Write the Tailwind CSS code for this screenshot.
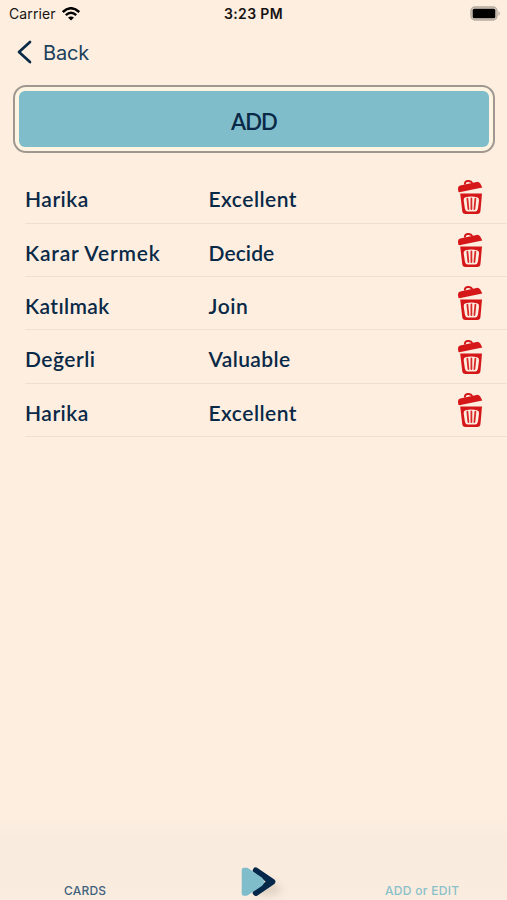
<!DOCTYPE html>
<html lang="tr">
<head>
<meta charset="utf-8">
<title>Cards</title>
<script src="https://cdn.jsdelivr.net/npm/@tailwindcss/browser@4"></script>
</head>
<body class="bg-[#fdeee0]">
<svg class="hidden">
  <symbol id="trash" viewBox="0 0 26 36">
    <path d="M8 5.500C6.800 1.800 13.500 .500 15.200 4" fill="none" stroke="#d51719" stroke-width="2"/>
    <path d="M1 10.500Q.800 7.200 3.200 6.500L19.500 2.900Q22 2.600 23.400 4.700L25.300 8.400L2.400 13.300Q1.200 13.300 1 10.500Z" fill="#d51719"/>
    <path d="M3.200 14.500H25L23.500 31.700Q23.200 35 20.200 35H8.500Q5.500 35 5.200 31.700Z" fill="#d51719"/>
    <path d="M8.500 18.200Q14.300 17 20 18.200Q22.300 18.800 22 21.400L21 29.500Q20.600 32.200 18.100 32.400H10.700Q8.200 32.200 7.900 29.500L6.700 21.400Q6.400 18.800 8.500 18.200Z" fill="#fdeee0"/>
    <path d="M10.400 19.600L11.400 30M14.400 19.400V30M18.400 19.600L17.400 30" stroke="#d9282a" stroke-width="1.800" stroke-linecap="round"/>
  </symbol>
</svg>
<main class="flex h-[900px] w-[507px] flex-col overflow-hidden font-['Lato','Noto_Sans',sans-serif] text-[#092947]">
  <header class="grid h-[27px] grid-cols-3 items-center pr-[6px] pl-[9px] font-['Inter',sans-serif] text-[#171412]">
    <div class="flex items-center gap-[6px]">
      <span class="text-[14px] tracking-[0.1px]">Carrier</span>
      <svg class="h-[14px] w-[18px]" viewBox="0 0 18 14" fill="none" stroke="#000" stroke-width="2.500"><path d="M.8 5Q9-2.500 17.200 5M3.800 8.100Q9 3.500 14.200 8.100"/><path d="M9 13.500L6 10.600Q9 8.300 12 10.600Z" fill="#000" stroke="none"/></svg>
    </div>
    <span class="pr-[3px] text-center text-[14px] font-semibold tracking-[0.35px]">3:23 PM</span>
    <svg class="h-[15px] w-[31px] justify-self-end" viewBox="0 0 31 15"><rect x="1" y="1" width="26" height="13" rx="4" fill="#dccfc3" stroke="#b5aaa0" stroke-width="1.400"/><rect x="2.700" y="2.700" width="22.600" height="9.600" rx="1.500" fill="#000"/><path d="M28.500 5Q31 7.500 28.500 10Z" fill="#aaa097"/></svg>
  </header>
  <nav class="flex h-[58px] items-start pt-[13px] pl-[17px]">
    <svg class="h-6 w-[15px]" viewBox="0 0 15 24" fill="none" stroke="#092947" stroke-width="2.700" stroke-linecap="round" stroke-linejoin="round"><path d="M13 2L2 12L13 22"/></svg>
    <span class="ml-[11px] font-['Inter',sans-serif] text-[20px] leading-[26px] tracking-[-0.2px] text-[#203f5c]">Back</span>
  </nav>
  <div class="mr-[12px] ml-[13px] h-[68px] rounded-[13px] border-2 border-[#a09890] bg-[#fff4e2] p-[4px]">
    <button class="flex h-full w-full items-center justify-center rounded-[6px] bg-[#80bdcb] pt-[5px] text-[22px] font-semibold tracking-[-0.9px]">ADD</button>
  </div>
  <ul class="mt-[17.500px] ml-[25px] text-[21px] font-semibold">
    <li class="flex h-[53.300px] items-center border-b border-[#eedfd2]"><span class="w-[183.500px] pt-[5px] tracking-[0.5px]">Harika</span><span class="grow pt-[5px] tracking-[0.5px]">Excellent</span><svg class="mr-[24px] h-9 w-[26px]"><use href="#trash"/></svg></li>
    <li class="flex h-[53.300px] items-center border-b border-[#eedfd2]"><span class="w-[183.500px] pt-[5px] tracking-[0.8px]">Karar Vermek</span><span class="grow pt-[5px] tracking-[0.1px]">Decide</span><svg class="mr-[24px] h-9 w-[26px]"><use href="#trash"/></svg></li>
    <li class="flex h-[53.300px] items-center border-b border-[#eedfd2]"><span class="w-[183.500px] pt-[5px] tracking-[0.4px]">Katılmak</span><span class="grow pt-[5px] tracking-[0.6px]">Join</span><svg class="mr-[24px] h-9 w-[26px]"><use href="#trash"/></svg></li>
    <li class="flex h-[53.300px] items-center border-b border-[#eedfd2]"><span class="w-[183.500px] pt-[5px] tracking-[0.5px]">Değerli</span><span class="grow pt-[5px] tracking-[0.4px]">Valuable</span><svg class="mr-[24px] h-9 w-[26px]"><use href="#trash"/></svg></li>
    <li class="flex h-[53.300px] items-center border-b border-[#eedfd2]"><span class="w-[183.500px] pt-[5px] tracking-[0.5px]">Harika</span><span class="grow pt-[5px] tracking-[0.5px]">Excellent</span><svg class="mr-[24px] h-9 w-[26px]"><use href="#trash"/></svg></li>
  </ul>
  <footer class="mt-auto flex h-[84px] items-end bg-linear-to-b from-[#fdeee0] via-[#f8eadd] via-35% to-[#faede0] pl-[64px] font-['Inter',sans-serif] text-[12px] font-medium">
    <span class="w-[176px] leading-[18px] tracking-[0.2px] text-[#41617d]">CARDS</span>
    <svg class="mb-[2px] h-[34px] w-[145px] overflow-visible" viewBox="0 0 145 34"><ellipse cx="27" cy="25" rx="14" ry="7" fill="#7d6653" class="opacity-20 blur-[4px]"/><path d="M15.800 6.500L32.300 17.700L15.800 28.900M24 12.500L30.500 17.700L24 22.900" fill="none" stroke="#05274a" stroke-width="6" stroke-linecap="round" stroke-linejoin="round"/><path d="M4 6V29.400H6.500L20.500 20Q23 17.700 20.500 15.400L6.500 6Z" fill="#80bdcb" stroke="#80bdcb" stroke-width="4.600" stroke-linejoin="round"/></svg>
    <span class="leading-[18px] tracking-[0.3px] text-[#89c0c9]">ADD or EDIT</span>
  </footer>
</main>
</body>
</html>
